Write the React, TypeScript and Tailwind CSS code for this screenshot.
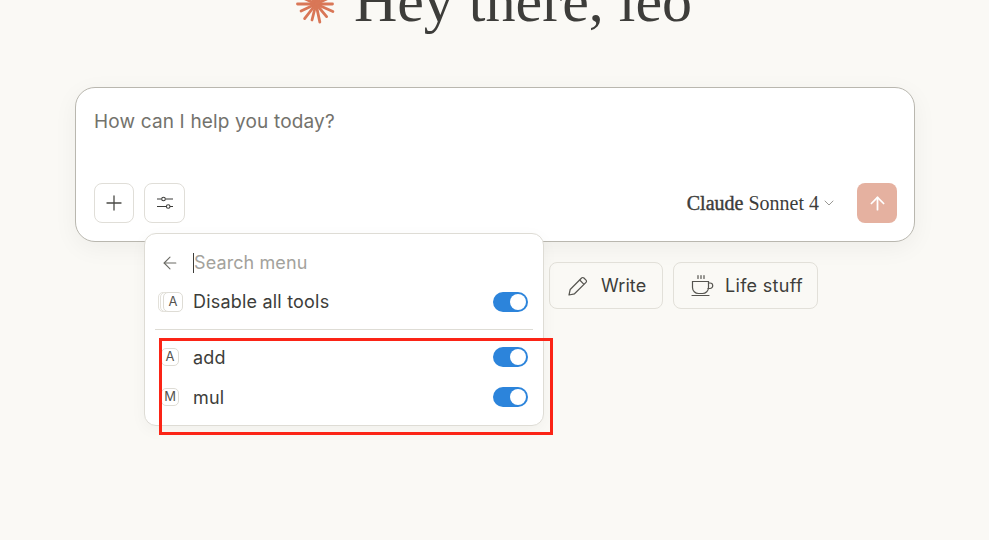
import { ArrowLeft, ArrowUp, ChevronDown, Plus } from "lucide-react"

const ui = "font-['Inter','Noto_Sans',sans-serif]"

function Sunburst() {
  const rays = [0, 24, 50, 78, 104, 128, 155, 180, 205, 232, 258, 285, 310, 335]
  return (
    <svg width="42" height="42" viewBox="-21 -21 42 42" className="shrink-0">
      <circle cx="0" cy="0" r="5" fill="#d97757" />
      {rays.map((a, i) => (
        <line
          key={a}
          x1="0"
          y1="0"
          x2={(i % 2 ? 18.5 : 16.5) * Math.cos((a * Math.PI) / 180)}
          y2={(i % 2 ? 18.5 : 16.5) * Math.sin((a * Math.PI) / 180)}
          stroke="#d97757"
          strokeWidth="2.8"
          strokeLinecap="round"
        />
      ))}
    </svg>
  )
}

function Toggle() {
  return (
    <div className="flex h-5 w-[35px] items-center justify-end rounded-full bg-[#2c84db] pr-[2px]">
      <div className="h-4 w-4 rounded-full bg-white" />
    </div>
  )
}

function KeyBadge({ letter }: { letter: string }) {
  return (
    <div className="flex h-[18px] w-[18px] items-center justify-center rounded-[5px] border border-[#dedcd5] bg-white text-[13px] text-[#55544f]">
      {letter}
    </div>
  )
}

function ToolRow({ letter, label }: { letter: string; label: string }) {
  return (
    <div className="flex h-10 items-center pl-[16px] pr-[15px]">
      <KeyBadge letter={letter} />
      <span className="ml-[14px] flex-1 text-[18px] tracking-[0.2px] text-[#3d3d3a]">{label}</span>
      <Toggle />
    </div>
  )
}

export default function App() {
  return (
    <div className={`relative h-[540px] w-[989px] overflow-hidden bg-[#faf9f5] ${ui}`}>
      {/* greeting, cut off by the top of the window */}
      <div className="-mt-[17px] flex h-[104px] items-start justify-center gap-[17px] pr-[2px]">
        <Sunburst />
        <h1 className="-mt-[14px] font-['Liberation_Serif',serif] text-[60px] leading-[64px] text-[#3d3d3a]">Hey there, leo</h1>
      </div>

      <div className="ml-[75px] flex h-[155px] w-[840px] flex-col justify-between rounded-[20px] border border-[#b9b7af] bg-white pb-[18px] pl-[18px] pr-[17px] pt-[21px] shadow-[0_6px_24px_rgba(0,0,0,0.05)]">
        <p className="text-[19px] leading-[26px] tracking-[0.16px] text-[#73726c]">How can I help you today?</p>
        <div className="flex items-center">
          <button className="flex h-10 w-10 items-center justify-center rounded-lg border border-[#e0ded8]">
            <Plus className="h-[24px] w-[24px] text-[#4a4a45]" strokeWidth={1.3} />
          </button>
          <button className="ml-[10px] flex h-10 w-[41px] items-center justify-center rounded-lg border border-[#e0ded8]">
            <svg width="16" height="14" viewBox="0 0 16 14" fill="none" stroke="#3d3d3a" strokeWidth="1.1">
              <path d="M0 3h4.5M8.5 3h7.5M0 10.5h9.5M13 10.5h3" />
              <circle cx="6.5" cy="3" r="1.8" />
              <circle cx="11.2" cy="10.5" r="1.8" />
            </svg>
          </button>
          <div className="ml-auto flex items-center font-['Liberation_Serif',serif] text-[20px] text-[#3d3d3a]">
            <span className="[-webkit-text-stroke:0.4px_#3d3d3a]">Claude</span>
            <span className="ml-[5px]">Sonnet 4</span>
            <ChevronDown className="ml-[2px] h-[16px] w-[16px] text-[#73726c]" strokeWidth={1.1} />
          </div>
          <button className="ml-[20px] flex h-10 w-10 items-center justify-center rounded-lg bg-[#e5b1a0]">
            <ArrowUp className="h-[21px] w-[21px] text-white" strokeWidth={2} />
          </button>
        </div>
      </div>

      <div className="mt-5 flex gap-[10px] pl-[549px]">
        <button className="flex h-[47px] w-[114px] items-center gap-[12px] rounded-lg border border-[#e2e0d9] pl-[17px] text-[18px] tracking-[0.1px] text-[#3d3d3a]">
          <svg width="22" height="22" viewBox="0 0 22 22" fill="none" stroke="#55544f" strokeWidth="1.2" strokeLinejoin="round">
            <path d="M2 20l1.2-5.5L14.6 3a1.6 1.6 0 0 1 2.3 0l2.1 2.1a1.6 1.6 0 0 1 0 2.3L7.5 18.8z" />
            <path d="M12.7 5l4.3 4.3" />
          </svg>
          Write
        </button>
        <button className="flex h-[47px] w-[145px] items-center gap-[11px] rounded-lg border border-[#e2e0d9] pl-[17px] text-[18px] tracking-[0.3px] text-[#3d3d3a]">
          <svg width="23" height="23" viewBox="0 0 23 23" fill="none" stroke="#55544f" strokeWidth="1.2" strokeLinecap="round">
            <path d="M7 1.5v3M10 1.5v3M13 1.5v3" />
            <path d="M1.5 7.5h16v6a6 6 0 0 1-6 6h-4a6 6 0 0 1-6-6z" />
            <path d="M17.5 9h1.5a2.5 2.5 0 0 1 0 5.5h-2" />
            <path d="M1 21.5h17" />
          </svg>
          Life stuff
        </button>
      </div>

      {/* tools menu */}
      <div className="absolute left-[144px] top-[233px] h-[193px] w-[400px] rounded-xl border border-[#dedcd5] bg-white shadow-[0_4px_16px_rgba(0,0,0,0.04)]">
        <div className="flex h-[56px] items-center pl-[15px] pt-[1px]">
          <ArrowLeft className="h-5 w-5 text-[#6b6a64]" strokeWidth={1.3} />
          <div className="ml-[13px] h-[20px] w-px bg-[#3d3d3a]" />
          <span className="text-[18px] tracking-[0.1px] text-[#a3a29c]">Search menu</span>
        </div>
        <div className="-mt-[4px] flex h-[32px] items-center pl-[13px] pr-[15px]">
          <div className="relative h-[20px] w-[25px]">
            <div className="absolute left-0 top-0 h-[20px] w-[16px] rounded-[5px] border border-[#e3e1da] bg-white" />
            <div className="absolute left-[2px] top-0 h-[20px] w-[16px] rounded-[5px] border border-[#e3e1da] bg-white" />
            <div className="absolute left-[5px] top-0 flex h-[20px] w-[20px] items-center justify-center rounded-[5px] border border-[#dedcd5] bg-white text-[13px] text-[#55544f]">
              A
            </div>
          </div>
          <span className="ml-[10px] -mt-[2px] flex-1 text-[18px] tracking-[0.2px] text-[#3d3d3a]">Disable all tools</span>
          <Toggle />
        </div>
        <div className="mx-[10px] mt-[11px] h-px bg-[#dedcd5]" />
        <div className="mt-[7px]">
          <ToolRow letter="A" label="add" />
          <ToolRow letter="M" label="mul" />
        </div>
      </div>

      {/* red annotation over the screenshot */}
      <div className="absolute left-[159px] top-[338px] h-[97px] w-[394px] border-[3px] border-[#fb2416]" />
    </div>
  )
}
